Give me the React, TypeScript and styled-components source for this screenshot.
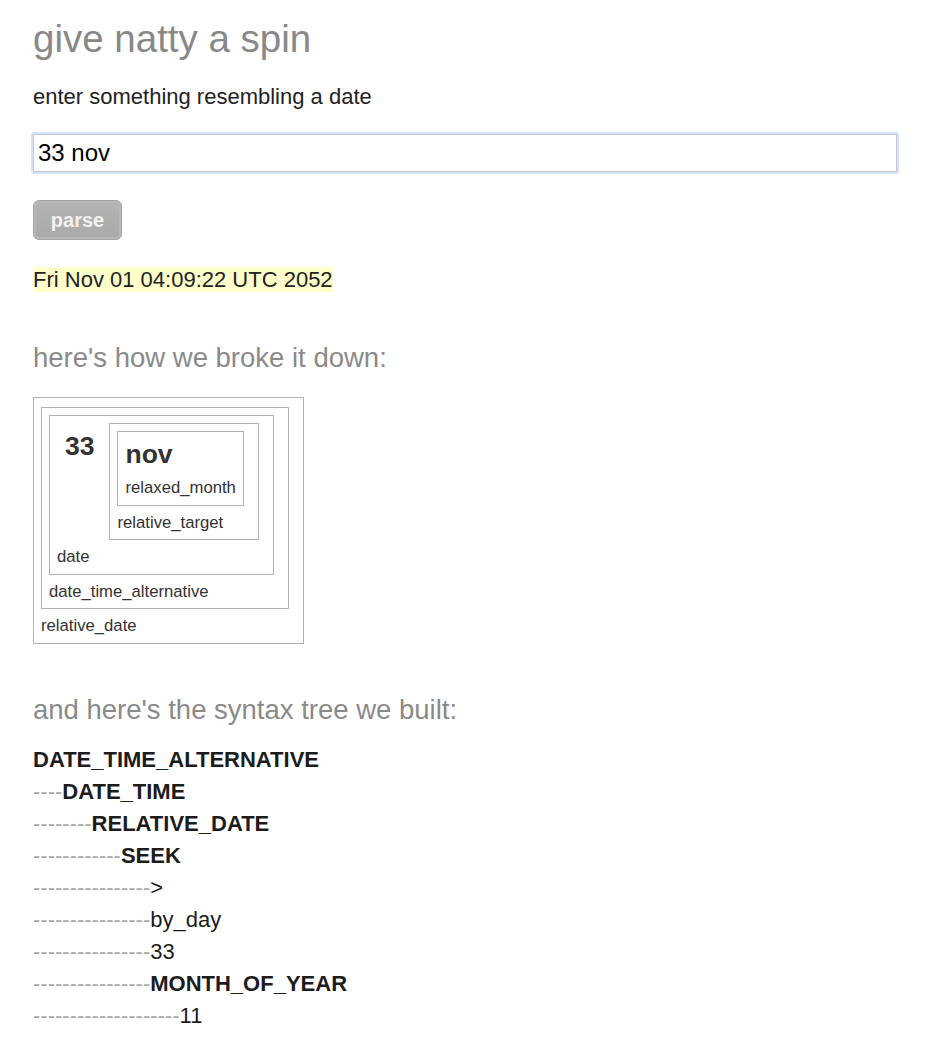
import React from "react";
import styled, { createGlobalStyle } from "styled-components";

const Global = createGlobalStyle`
  html, body { margin: 0; padding: 0; background: #ffffff; }
  body { font-family: "Liberation Sans", Arial, Helvetica, sans-serif; color: #222; }
`;

const Page = styled.main`
  padding: 17px 0 20px 33px;
  display: flex;
  flex-direction: column;
  align-items: flex-start;
`;

const Title = styled.h1`
  margin: 0;
  font-size: 38.5px;
  line-height: 44px;
  font-weight: normal;
  color: #888888;
`;

const Intro = styled.p`
  margin: 23px 0 0;
  font-size: 22px;
  line-height: 25px;
  color: #222;
`;

const DateInput = styled.input`
  box-sizing: border-box;
  margin: 25px 0 0;
  width: 864px;
  height: 38px;
  padding: 0 4px;
  border: 1px solid #c4c7cc;
  border-radius: 1px;
  box-shadow: 0 0 0 2px #d3e2f8;
  font-family: "Liberation Sans", Arial, sans-serif;
  font-size: 24px;
  color: #000;
  outline: none;
  background: #fff;
`;

const ParseButton = styled.button`
  box-sizing: border-box;
  margin-top: 28px;
  width: 89px;
  height: 40px;
  border: 1px solid #a3a3a3;
  border-radius: 6px;
  background: linear-gradient(#b4b4b4, #a9a9a9);
  box-shadow: inset 0 0 0 2px #b8b8b8;
  font-family: "Liberation Sans", Arial, sans-serif;
  font-weight: bold;
  font-size: 20px;
  color: #f1f1f1;
  padding: 0;
  cursor: default;
`;

const ResultLine = styled.div`
  margin-top: 28px;
  font-size: 22px;
  line-height: 24px;
`;

const Highlight = styled.span`
  background: #ffffcc;
  color: #222;
`;

const SectionTitle = styled.h2<{ $gap: number }>`
  margin: ${(p) => p.$gap}px 0 0;
  font-size: 27.5px;
  line-height: 32px;
  font-weight: normal;
  color: #8a8a8a;
`;

const Box = styled.div<{ $root?: boolean }>`
  box-sizing: border-box;
  display: flex;
  flex-direction: column;
  align-items: flex-start;
  border: 1px solid #b2b2b2;
  padding: ${(p) => (p.$root ? "9px 7px 7px" : "7px")};
  margin-right: ${(p) => (p.$root ? "0" : "7px")};
  margin-top: ${(p) => (p.$root ? "23px" : "0")};
  color: #333;
`;

const BoxContent = styled.div`
  display: flex;
  align-items: flex-start;
  gap: 7px;
`;

const BoxLabel = styled.div`
  margin-top: 7px;
  font-size: 16.7px;
  line-height: 19.5px;
  color: #333;
`;

const Token = styled.div<{ $padded?: boolean }>`
  font-weight: bold;
  font-size: 26.5px;
  line-height: 30px;
  color: #333;
  padding: ${(p) => (p.$padded ? "8px" : "0")};
  margin-bottom: ${(p) => (p.$padded ? "0" : "2px")};
`;

const Tree = styled.div`
  margin-top: 18px;
  display: flex;
  flex-direction: column;
`;

const TreeRow = styled.div`
  font-size: 22px;
  line-height: 32px;
  white-space: pre;
`;

const Dashes = styled.span`
  color: #a8a8a8;
`;

const NodeText = styled.span<{ $bold?: boolean }>`
  color: #1c1c1c;
  font-weight: ${(p) => (p.$bold ? "bold" : "normal")};
`;

type TreeItem = { depth: number; text: string; bold: boolean };

const tree: TreeItem[] = [
  { depth: 0, text: "DATE_TIME_ALTERNATIVE", bold: true },
  { depth: 1, text: "DATE_TIME", bold: true },
  { depth: 2, text: "RELATIVE_DATE", bold: true },
  { depth: 3, text: "SEEK", bold: true },
  { depth: 4, text: ">", bold: false },
  { depth: 4, text: "by_day", bold: false },
  { depth: 4, text: "33", bold: false },
  { depth: 4, text: "MONTH_OF_YEAR", bold: true },
  { depth: 5, text: "11", bold: false },
];

export default function App() {
  return (
    <>
      <Global />
      <Page>
        <Title>give natty a spin</Title>
        <Intro>enter something resembling a date</Intro>
        <DateInput type="text" defaultValue="33 nov" />
        <ParseButton type="button">parse</ParseButton>
        <ResultLine>
          <Highlight>Fri Nov 01 04:09:22 UTC 2052</Highlight>
        </ResultLine>

        <SectionTitle $gap={50}>here's how we broke it down:</SectionTitle>
        <Box $root>
          <BoxContent>
            <Box>
              <BoxContent>
                <Box>
                  <BoxContent>
                    <Token $padded>33</Token>
                    <Box>
                      <BoxContent>
                        <Box>
                          <Token>nov</Token>
                          <BoxLabel>relaxed_month</BoxLabel>
                        </Box>
                      </BoxContent>
                      <BoxLabel>relative_target</BoxLabel>
                    </Box>
                  </BoxContent>
                  <BoxLabel>date</BoxLabel>
                </Box>
              </BoxContent>
              <BoxLabel>date_time_alternative</BoxLabel>
            </Box>
          </BoxContent>
          <BoxLabel>relative_date</BoxLabel>
        </Box>

        <SectionTitle $gap={50}>and here's the syntax tree we built:</SectionTitle>
        <Tree>
          {tree.map((item, i) => (
            <TreeRow key={i}>
              <Dashes>{"-".repeat(item.depth * 4)}</Dashes>
              <NodeText $bold={item.bold}>{item.text}</NodeText>
            </TreeRow>
          ))}
        </Tree>
      </Page>
    </>
  );
}
